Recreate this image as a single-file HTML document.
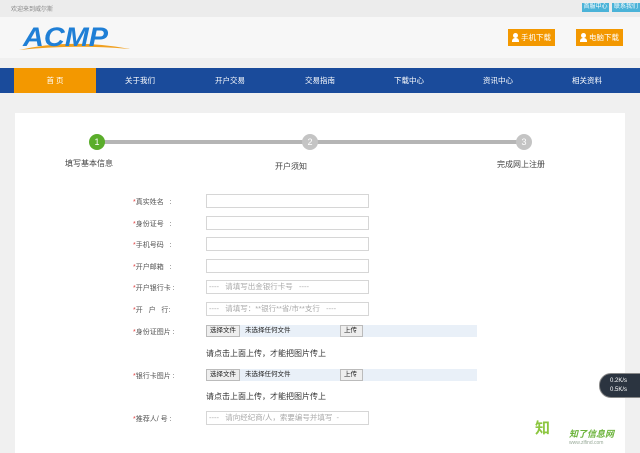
<!DOCTYPE html>
<html><head><meta charset="utf-8"><style>
*{margin:0;padding:0;box-sizing:border-box}
body{width:640px;height:450px;overflow:hidden;background:#f0f0f0;font-family:"Liberation Sans","Noto Sans CJK SC",sans-serif;position:relative;font-size:8px;color:#333}
.abs{position:absolute}
.top{left:0;top:0;width:640px;height:17px;background:#ececec}
.hdr{left:0;top:17px;width:640px;height:41px;background:#f7f7f7}
.nav{left:0;top:68px;width:640px;height:25px;background:#1a4b9b}
.nav div{position:absolute;top:0;height:25px;line-height:25px;color:#fff;font-size:7.5px;text-align:center;width:66px}
.panel{left:15px;top:113px;width:610px;height:340px;background:#fff}
.btn{background:#f39800;color:#fff;font-size:7.5px;height:17px;line-height:17px;text-align:left;padding-left:13px}
.btn i{position:absolute;left:4px;top:4px;width:7px;height:9px}
.btn i:before{content:"";position:absolute;left:1px;top:0;width:5px;height:5px;border-radius:50%;background:#fff}
.btn i:after{content:"";position:absolute;left:0;top:5px;width:7px;height:4px;border-radius:3px 3px 0 0;background:#fff}
.lbl{font-size:7px;color:#555}
.lbl b{color:#e04040;font-weight:normal}
.inp{width:163px;height:14px;border:1px solid #d6d6d6;background:#fff;font-size:7.5px;color:#aaa;line-height:12px;padding-left:2px;white-space:nowrap;overflow:hidden}
.file{width:271px;height:12px;background:#e9f0f8;font-size:6.5px;color:#222;line-height:12px}
.fb{position:absolute;top:0;height:12px;border:1px solid #bbb;background:#eee;padding:0 3px;line-height:10px}
.note{font-size:8px;color:#333}
.circ{width:16px;height:16px;border-radius:50%;color:#fff;text-align:center;line-height:16px;font-size:9px}
</style></head><body>
<div class="abs top"></div>
<div class="abs" style="left:11px;top:4px;font-size:6px;color:#888">欢迎来到威尔斯</div>
<div class="abs" style="left:582px;top:3px;width:27px;height:9px;background:#4bb3d8;color:#fff;font-size:6px;line-height:9px;text-align:center">首服中心</div>
<div class="abs" style="left:612px;top:3px;width:28px;height:9px;background:#4bb3d8;color:#fff;font-size:6px;line-height:9px;text-align:center">联系我们</div>
<div class="abs hdr"></div>
<svg class="abs" style="left:18px;top:18px" width="120" height="34" viewBox="0 0 120 34">
<path d="M1 32 Q55 20 112 31 Q55 26 1 32Z" fill="#f0a020"/>
<text x="5" y="28" font-family="Liberation Sans" font-weight="bold" font-style="italic" font-size="27" fill="#1f7fd6" textLength="85" lengthAdjust="spacingAndGlyphs">ACMP</text>
</svg>
<div class="abs btn" style="left:508px;top:29px;width:47px"><i></i>手机下载</div>
<div class="abs btn" style="left:576px;top:29px;width:47px"><i></i>电脑下载</div>
<div class="abs nav">
<div style="left:14px;width:82px;background:#f39800">首 页</div>
<div style="left:107px">关于我们</div>
<div style="left:197px">开户交易</div>
<div style="left:287px">交易指南</div>
<div style="left:376px">下载中心</div>
<div style="left:465px">资讯中心</div>
<div style="left:554px">相关资料</div>
</div>
<div class="abs panel"></div>
<div class="abs" style="left:98px;top:140px;width:427px;height:4px;background:#b5b5b5;border-radius:2px"></div>
<div class="abs circ" style="left:89px;top:134px;background:#5aad2b">1</div>
<div class="abs circ" style="left:302px;top:134px;background:#c4c4c4">2</div>
<div class="abs circ" style="left:516px;top:134px;background:#c4c4c4">3</div>
<div class="abs" style="left:65px;top:158px;font-size:8px;color:#444">填写基本信息</div>
<div class="abs" style="left:275px;top:161px;font-size:8px;color:#444">开户须知</div>
<div class="abs" style="left:497px;top:159px;font-size:8px;color:#444">完成网上注册</div>

<div class="abs lbl" style="left:133px;top:197px"><b>*</b>真实姓名 &nbsp; :</div>
<div class="abs inp" style="left:206px;top:194px"></div>
<div class="abs lbl" style="left:133px;top:219px"><b>*</b>身份证号 &nbsp; :</div>
<div class="abs inp" style="left:206px;top:216px"></div>
<div class="abs lbl" style="left:133px;top:240px"><b>*</b>手机号码 &nbsp; :</div>
<div class="abs inp" style="left:206px;top:237px"></div>
<div class="abs lbl" style="left:133px;top:262px"><b>*</b>开户邮箱 &nbsp; :</div>
<div class="abs inp" style="left:206px;top:259px"></div>
<div class="abs lbl" style="left:133px;top:283px"><b>*</b>开户银行卡 :</div>
<div class="abs inp" style="left:206px;top:280px">----&nbsp;&nbsp; 请填写出金银行卡号 &nbsp; ----</div>
<div class="abs lbl" style="left:133px;top:305px"><b>*</b>开 &nbsp; 户 &nbsp; 行:</div>
<div class="abs inp" style="left:206px;top:302px">----&nbsp;&nbsp; 请填写：**银行**省/市**支行 &nbsp; ----</div>
<div class="abs lbl" style="left:133px;top:327px"><b>*</b>身份证图片 :</div>
<div class="abs file" style="left:206px;top:325px"><span class="fb" style="left:0">选择文件</span><span style="position:absolute;left:39px">未选择任何文件</span><span class="fb" style="left:134px;width:23px">上传</span></div>
<div class="abs note" style="left:206px;top:348px">请点击上面上传，才能把图片传上</div>
<div class="abs lbl" style="left:133px;top:371px"><b>*</b>银行卡图片 :</div>
<div class="abs file" style="left:206px;top:369px"><span class="fb" style="left:0">选择文件</span><span style="position:absolute;left:39px">未选择任何文件</span><span class="fb" style="left:134px;width:23px">上传</span></div>
<div class="abs note" style="left:206px;top:391px">请点击上面上传，才能把图片传上</div>
<div class="abs lbl" style="left:133px;top:414px"><b>*</b>推荐人/ 号 :</div>
<div class="abs inp" style="left:206px;top:411px">----&nbsp;&nbsp; 请向经纪商/人，索要编号并填写 &nbsp;-</div>

<div class="abs" style="left:599px;top:373px;width:45px;height:25px;background:#2b3440;border-radius:12px 0 0 12px;color:#fff;font-size:6px;padding:3px 0 0 10px;line-height:9px;border:1px solid #888">0.2K/s<br>0.5K/s</div>
<div class="abs" style="left:535px;top:417px;font-size:15px;color:#8cc63f;font-weight:bold">知</div>
<div class="abs" style="left:569px;top:427px;font-size:9px;color:#6bb33a;font-weight:bold;font-style:italic">知了信息网</div>
<div class="abs" style="left:569px;top:440px;font-size:5px;color:#9a9">www.zlfind.com</div>
</body></html>
